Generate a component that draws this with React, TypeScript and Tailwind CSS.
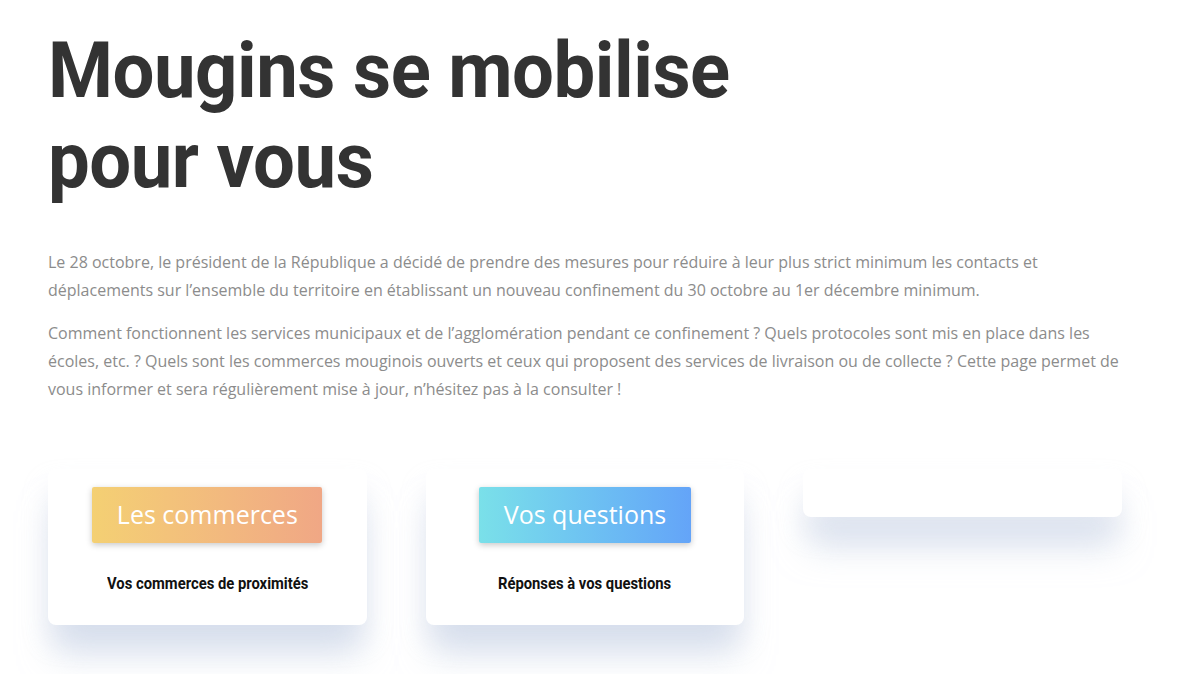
const CARDS = [
  {
    label: 'Les commerces',
    caption: 'Vos commerces de proximités',
    grad: 'bg-gradient-to-r from-[#f4d073] to-[#f0a785]',
    btnW: 'w-[230px]',
  },
  {
    label: 'Vos questions',
    caption: 'Réponses à vos questions',
    grad: 'bg-gradient-to-r from-[#7ae0e9] to-[#64a4f8]',
    btnW: 'w-[212px]',
  },
]

// soft bluish drop shadow that mostly sits under the card
const cardShadow = 'shadow-[0_36px_34px_-6px_rgba(196,208,228,0.6),0_16px_24px_rgba(214,222,236,0.35)]'

export default function App() {
  return (
    <div className="min-h-screen bg-white overflow-hidden">
      <div className="w-[1074px] ml-[48px] pt-[26px]">
        <h1 className="font-['Roboto',sans-serif] font-bold text-[78px] leading-[90px] tracking-[-0.5px] text-[#333333] origin-left scale-x-[0.952] whitespace-nowrap">
          Mougins se mobilise
          <br />
          pour vous
        </h1>

        <div className="mt-[42px] font-['Open_Sans',sans-serif] text-[16px] leading-[28px] text-[#8c8c8c]">
          <p>
            Le 28 octobre, le président de la République a décidé de prendre des mesures pour réduire à leur plus strict minimum les contacts et déplacements sur l’ensemble du territoire en établissant un nouveau confinement du 30 octobre au 1er décembre minimum.
          </p>
          <p className="mt-[15px]">
            Comment fonctionnent les services municipaux et de l’agglomération pendant ce confinement ? Quels protocoles sont mis en place dans les écoles, etc. ? Quels sont les commerces mouginois ouverts et ceux qui proposent des services de livraison ou de collecte ? Cette page permet de vous informer et sera régulièrement mise à jour, n’hésitez pas à la consulter !
          </p>
        </div>

        <div className="mt-[66px] grid grid-cols-3 gap-[59px] items-start">
          {CARDS.map(c => (
            <div
              key={c.label}
              className={`bg-white rounded-[8px] pt-[18px] pb-[32px] flex flex-col items-center ${cardShadow}`}
            >
              <div
                className={`${c.btnW} h-[56px] ${c.grad} rounded-[2px] shadow-[0_2px_6px_rgba(0,0,0,0.22)] flex items-center justify-center font-['Open_Sans',sans-serif] text-[25px] text-white`}
              >
                {c.label}
              </div>
              <div className="mt-[30px] font-['Roboto',sans-serif] font-bold text-[17px] leading-[20px] text-[#111111] scale-x-[0.87] whitespace-nowrap">
                {c.caption}
              </div>
            </div>
          ))}
          <div className={`bg-white rounded-[8px] h-[48px] ${cardShadow}`} />
        </div>
      </div>
    </div>
  )
}
